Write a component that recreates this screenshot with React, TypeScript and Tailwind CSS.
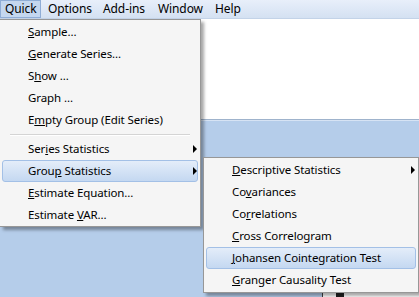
import React from 'react';

type Item = { pre: string; key: string; post: string; sub?: boolean; active?: boolean };

const mainItems: (Item | 'sep')[] = [
  { pre: '', key: 'S', post: 'ample...' },
  { pre: '', key: 'G', post: 'enerate Series...' },
  { pre: 'S', key: 'h', post: 'ow ...' },
  { pre: 'Graph ...', key: '', post: '' },
  { pre: 'E', key: 'm', post: 'pty Group (Edit Series)' },
  'sep',
  { pre: 'Ser', key: 'i', post: 'es Statistics', sub: true },
  { pre: 'Grou', key: 'p', post: ' Statistics', sub: true, active: true },
  { pre: '', key: 'E', post: 'stimate Equation...' },
  { pre: 'Estimate ', key: 'V', post: 'AR...' },
];

const subItems: Item[] = [
  { pre: '', key: 'D', post: 'escriptive Statistics', sub: true },
  { pre: 'Co', key: 'v', post: 'ariances' },
  { pre: 'Co', key: 'r', post: 'relations' },
  { pre: '', key: 'C', post: 'ross Correlogram' },
  { pre: '', key: 'J', post: 'ohansen Cointegration Test', active: true },
  { pre: '', key: 'G', post: 'ranger Causality Test' },
];

function Row({ item }: { item: Item }) {
  return (
    <div
      className={`mx-[2px] h-[22px] flex items-center pl-[25px] pr-0 rounded-[3px] border ${
        item.active
          ? 'border-[#a3c0e6] bg-gradient-to-b from-[#e4edf9] to-[#c4d8f1]'
          : 'border-transparent'
      }`}
    >
      <span className="whitespace-nowrap">
        {item.pre}
        {item.key && <u className="underline-offset-[1px]">{item.key}</u>}
        {item.post}
      </span>
      {item.sub && (
        <span className="ml-auto w-0 h-0 border-y-[4px] border-y-transparent border-l-[4px] border-l-black" />
      )}
    </div>
  );
}

export default function App() {
  return (
    <div
      className="relative w-[419px] h-[297px] overflow-hidden bg-white text-[11.5px] tracking-[-0.1px] text-black flex flex-col"
      style={{ fontFamily: '"Segoe UI", "Noto Sans", sans-serif' }}
    >
      {/* menu bar */}
      <div className="h-[19px] flex items-stretch bg-gradient-to-b from-[#e8effa] to-[#d4e1f2] border-b border-[#c3d3e8] text-[12px]">
        <div className="w-[41px] pl-[4px] flex items-center bg-[#c4d7ef] border border-[#8fadd6]">Quick</div>
        <div className="w-[55px] pl-[7px] flex items-center">Options</div>
        <div className="w-[55px] pl-[7px] flex items-center">Add-ins</div>
        <div className="w-[57px] pl-[7px] flex items-center">Window</div>
        <div className="pl-[7px] flex items-center">Help</div>
      </div>

      {/* window content */}
      <div className="h-[100px] bg-white" />
      <div className="h-[1px] bg-[#9fb3cc]" />
      <div className="h-[1px] bg-[#d6e3f4]" />
      <div className="flex-1 flex flex-col bg-[#b5cdea]">
        <div className="flex-1" />
        <div className="h-[30px] flex">
          <div className="w-[322px]" />
          <div className="flex-1 bg-white border-l border-[#404040] pl-[13px] pt-[26px]">
            <div className="w-[8px] h-[4px] bg-[#202020]" />
          </div>
        </div>
      </div>

      {/* Quick menu */}
      <div className="absolute left-0 top-[19px] w-[201px] h-[208px] bg-[#f5f5f5] border border-l-0 border-[#979797] pt-[1px] shadow-[3px_3px_3px_rgba(0,0,0,0.35)]">
        {mainItems.map((it, i) =>
          it === 'sep' ? (
            <div key={i} className="h-[7px] flex flex-col justify-center px-[10px]">
              <div className="h-[1px] bg-[#d4d4d4]" />
              <div className="h-[1px] bg-white" />
            </div>
          ) : (
            <Row key={i} item={it} />
          )
        )}
      </div>

      {/* Group Statistics submenu */}
      <div className="absolute left-[203px] top-[157px] w-[216px] h-[136px] bg-[#f5f5f5] border border-[#979797] pt-[1px] shadow-[3px_3px_3px_rgba(0,0,0,0.35)]">
        {subItems.map((it, i) => (
          <Row key={i} item={it} />
        ))}
      </div>
    </div>
  );
}
